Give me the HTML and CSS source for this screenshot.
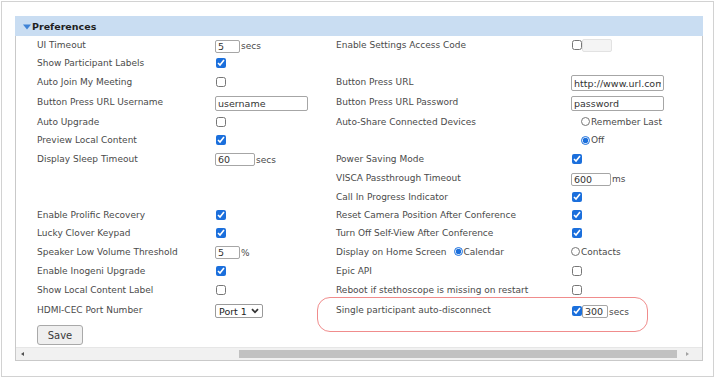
FILE: index.html
```html
<!DOCTYPE html>
<html lang="en">
<head>
    <meta charset="UTF-8">
    <title>Preferences</title>
    <link rel="stylesheet" href="styles.css">
</head>
<body>

<div class="frame">
    <div class="panel">
        <div class="panel-head">
            <svg class="caret" width="8" height="6" viewBox="0 0 8 6"><path d="M0 0.5 L8 0.5 L4 5.5 Z" fill="#3f83d6"/></svg>
            <span>Preferences</span>
        </div>

        <div class="panel-body">
            <div class="prefs">
                <!-- row 1 -->
                <span class="lbl">UI Timeout</span>
                <span class="ctl"><input class="txt w25" type="text" value="5"><span class="unit">secs</span></span>
                <span class="lbl">Enable Settings Access Code</span>
                <span class="ctl"><input type="checkbox"><input class="txt w30 disabled" type="text" disabled></span>

                <!-- row 2 -->
                <span class="lbl">Show Participant Labels</span>
                <span class="ctl"><input type="checkbox" checked></span>
                <span></span>
                <span></span>

                <!-- row 3 -->
                <span class="lbl">Auto Join My Meeting</span>
                <span class="ctl"><input type="checkbox"></span>
                <span class="lbl">Button Press URL</span>
                <span class="ctl"><input class="txt w93 tall" type="text" value="http://www.url.com"></span>

                <!-- row 4 -->
                <span class="lbl">Button Press URL Username</span>
                <span class="ctl"><input class="txt w93" type="text" value="username"></span>
                <span class="lbl">Button Press URL Password</span>
                <span class="ctl"><input class="txt w93" type="text" value="password"></span>

                <!-- row 5 -->
                <span class="lbl">Auto Upgrade</span>
                <span class="ctl"><input type="checkbox"></span>
                <span class="lbl">Auto-Share Connected Devices</span>
                <span class="ctl indent"><input type="radio" name="share"><span>Remember Last</span></span>

                <!-- row 6 -->
                <span class="lbl">Preview Local Content</span>
                <span class="ctl"><input type="checkbox" checked></span>
                <span></span>
                <span class="ctl indent"><input type="radio" name="share" checked><span>Off</span></span>

                <!-- row 7 -->
                <span class="lbl">Display Sleep Timeout</span>
                <span class="ctl"><input class="txt w40" type="text" value="60"><span class="unit">secs</span></span>
                <span class="lbl">Power Saving Mode</span>
                <span class="ctl"><input type="checkbox" checked></span>

                <!-- row 8 -->
                <span></span>
                <span></span>
                <span class="lbl">VISCA Passthrough Timeout</span>
                <span class="ctl"><input class="txt w40" type="text" value="600"><span class="unit">ms</span></span>

                <!-- row 9 -->
                <span></span>
                <span></span>
                <span class="lbl">Call In Progress Indicator</span>
                <span class="ctl"><input type="checkbox" checked></span>

                <!-- row 10 -->
                <span class="lbl">Enable Prolific Recovery</span>
                <span class="ctl"><input type="checkbox" checked></span>
                <span class="lbl">Reset Camera Position After Conference</span>
                <span class="ctl"><input type="checkbox" checked></span>

                <!-- row 11 -->
                <span class="lbl">Lucky Clover Keypad</span>
                <span class="ctl"><input type="checkbox" checked></span>
                <span class="lbl">Turn Off Self-View After Conference</span>
                <span class="ctl"><input type="checkbox" checked></span>

                <!-- row 12 -->
                <span class="lbl">Speaker Low Volume Threshold</span>
                <span class="ctl"><input class="txt w25" type="text" value="5"><span class="unit">%</span></span>
                <span class="lbl">Display on Home Screen
                    <span class="ctl home"><input type="radio" name="home" checked><span>Calendar</span></span>
                </span>
                <span class="ctl"><input type="radio" name="home"><span>Contacts</span></span>

                <!-- row 13 -->
                <span class="lbl">Enable Inogeni Upgrade</span>
                <span class="ctl"><input type="checkbox" checked></span>
                <span class="lbl">Epic API</span>
                <span class="ctl"><input type="checkbox"></span>

                <!-- row 14 -->
                <span class="lbl">Show Local Content Label</span>
                <span class="ctl"><input type="checkbox"></span>
                <span class="lbl">Reboot if stethoscope is missing on restart</span>
                <span class="ctl"><input type="checkbox"></span>

                <!-- row 15 -->
                <span class="lbl">HDMI-CEC Port Number</span>
                <span class="ctl low">
                    <select class="port"><option>Port 1</option><option>Port 2</option></select>
                    <svg class="chev" width="8" height="6" viewBox="0 0 8 6"><path d="M1 1.2 L4 4.3 L7 1.2" fill="none" stroke="#333" stroke-width="1.8"/></svg>
                </span>
                <span class="lbl">Single participant auto-disconnect</span>
                <span class="ctl low"><input type="checkbox" checked><input class="txt w26" type="text" value="300"><span class="unit">secs</span></span>
            </div>

            <button class="save">Save</button>
        </div>

        <div class="hscroll">
            <span class="arrow left"></span>
            <div class="track"><div class="thumb"></div></div>
            <span class="arrow right"></span>
        </div>
    </div>

    <!-- red annotation around the new setting -->
    <div class="highlight"></div>
</div>

</body>
</html>
```

FILE: styles.css
```css
body {
    margin: 0;
    background: #fff;
    font-family: "DejaVu Sans", Verdana, sans-serif;
    font-size: 9px;
    color: #4a4a4a;
}
.frame {
    position: relative;
    margin: 1px 0 0 1px;
    width: 711px;
    height: 374px;
    border: 1px solid #d2d2d2;
    overflow: hidden;
}
.panel {
    margin: 14px 0 0 13px;
    width: 686px;
    border: 1px solid #c9c9c9;
    border-top: none;
}
.panel-head {
    display: flex;
    align-items: center;
    height: 20px;
    margin: 0 -1px;
    padding-left: 8px;
    background: #c9ddf2;
    font-weight: bold;
    font-size: 9.5px;
    color: #1f1f1f;
}
.caret {
    margin-right: 1px;
    margin-top: 1px;
}
.panel-body {
    padding: 0 0 2px 21px;
}
.prefs {
    display: grid;
    grid-template-columns: 178px 121px 235px 1fr;
    grid-template-rows: 18px 18px 20px 20px 19px 18px 19px 20px 18px 18px 18px 19px 19px 19px 21px;
    align-items: center;
    line-height: 12px;
}
.lbl {
    display: flex;
    align-items: center;
    white-space: nowrap;
}
.ctl {
    display: flex;
    align-items: center;
    white-space: nowrap;
}
.ctl.indent {
    padding-left: 10px;
}
.ctl.home {
    margin-left: 7px;
}
.ctl.low {
    padding-top: 3px;
}
input[type=checkbox] {
    width: 10px;
    height: 10px;
    margin: 0 0 0 1px;
    accent-color: #1b6fdc;
}
input[type=radio] {
    width: 9px;
    height: 9px;
    margin: 0 1px 0 0;
    accent-color: #1b6fdc;
}
.txt {
    box-sizing: border-box;
    height: 13px;
    margin: 2px 0 0 0;
    padding: 0 2px;
    border: 1px solid #a6a6a6;
    border-radius: 2px;
    font-family: "DejaVu Sans", Verdana, sans-serif;
    font-size: 9.5px;
    color: #333;
    background: #fff;
}
.txt.tall {
    height: 16px;
}
.w25 { width: 25px; }
.w26 { width: 26px; margin-top: 0; }
.w30 { width: 30px; margin-top: 0; }
.w40 { width: 40px; }
.w93 { width: 93px; height: 15px; }
.txt.disabled {
    border-color: #e2e2e2;
    background: #f4f4f4;
}
.unit {
    margin-left: 1px;
    margin-top: 2px;
}
.port {
    appearance: none;
    box-sizing: border-box;
    width: 48px;
    height: 14px;
    padding: 0 0 0 3px;
    border: 1px solid #9a9a9a;
    border-radius: 2px;
    background: #fff;
    font-family: "DejaVu Sans", Verdana, sans-serif;
    font-size: 9.5px;
    color: #222;
}
.chev {
    margin-left: -12px;
    pointer-events: none;
}
.save {
    display: block;
    box-sizing: border-box;
    width: 46px;
    height: 20px;
    margin-top: 5px;
    padding: 0;
    border: 1px solid #a9a9a9;
    border-radius: 3px;
    background: #efefef;
    font-family: "DejaVu Sans", Verdana, sans-serif;
    font-size: 10px;
    color: #3a3a3a;
}
.hscroll {
    display: flex;
    align-items: center;
    height: 12px;
    border-top: 1px solid #e6e6e6;
    background: #f1f1f1;
}
.arrow {
    width: 0;
    height: 0;
    border-top: 2px solid transparent;
    border-bottom: 2px solid transparent;
}
.arrow.left {
    margin: 0 0 0 5px;
    border-right: 3px solid #505050;
}
.arrow.right {
    margin: 0 13px 0 0;
    border-left: 3px solid #a3a3a3;
}
.track {
    flex: 1;
    display: flex;
    align-items: center;
    height: 100%;
}
.thumb {
    height: 8px;
    width: 438px;
    margin-left: 215px;
    background: #c1c1c1;
}
.highlight {
    position: absolute;
    left: 315px;
    top: 295px;
    width: 329px;
    height: 33px;
    border: 1.5px solid #f08c8c;
    border-radius: 13px;
}
```
